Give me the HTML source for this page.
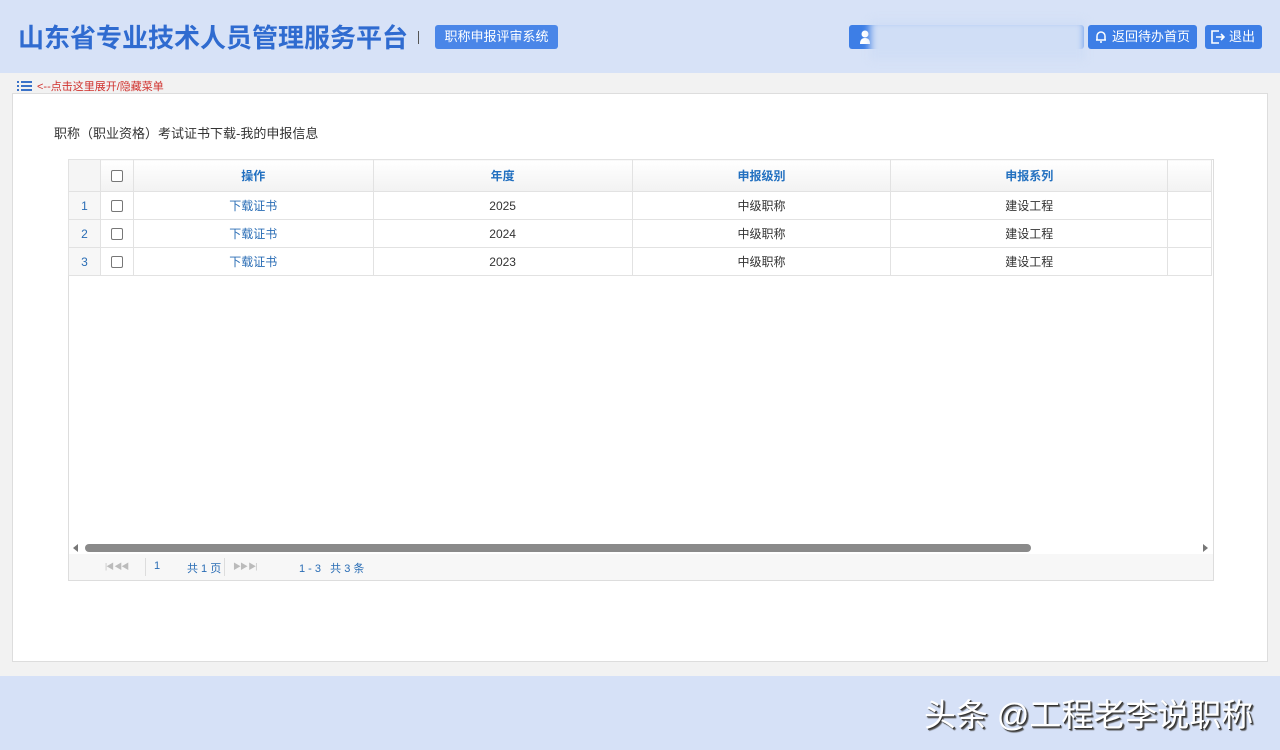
<!DOCTYPE html>
<html><head><meta charset="utf-8"><style>
*{margin:0;padding:0;box-sizing:border-box}
body{width:1280px;height:750px;overflow:hidden;background:#f2f2f2;font-family:"Liberation Sans","Noto Sans CJK SC",sans-serif;position:relative}
.hdr{position:absolute;left:0;top:0;width:1280px;height:73px;background:#d7e2f7}
.title{position:absolute;left:18px;top:21px;font-size:26px;font-weight:bold;color:#2f6bd0;line-height:34px}
.sep{position:absolute;left:418px;top:31px;width:1px;height:13px;background:#555}
.sys{position:absolute;left:435px;top:25px;width:123px;height:24px;background:#4a86e8;color:#fff;font-size:13px;line-height:24px;text-align:center;border-radius:3px}
.btn{position:absolute;top:25px;height:24px;background:#3d7ee6;color:#fff;font-size:13px;line-height:24px;border-radius:3px}
.blur{position:absolute;left:870px;top:20px;width:215px;height:40px;background:#d0def6;filter:blur(4px)}
.strip{position:absolute;left:0;top:73px;width:1280px;height:20px;background:#f2f2f2}
.menu{position:absolute;left:37px;top:78px;font-size:11px;color:#d0312d}
.panel{position:absolute;left:12px;top:93px;width:1256px;height:569px;background:#fff;border:1px solid #ddd}
.cap{position:absolute;left:54px;top:123px;font-size:13px;color:#333}
.grid{position:absolute;left:68px;top:159px;width:1146px;height:422px;border:1px solid #ddd;background:#fff}
table{border-collapse:collapse;position:absolute;left:-1px;top:-1px}
td{border:1px solid #e2e2e2;font-size:12px;text-align:center;color:#333;height:28px}
tr.h td{height:32px;background:linear-gradient(#fff,#f2f2f2);color:#2270c0;font-weight:bold;font-size:12px}
td.n{color:#2a6db5;background:#f7f7f7}
td.l{color:#2a6db5}
.cb{display:inline-block;width:12px;height:12px;border:1px solid #777;border-radius:2px;background:#fff;vertical-align:middle}
.pager{position:absolute;left:0;top:394px;width:1144px;height:26px;background:#f7f7f7;font-size:11px;color:#2a6db5}
.foot{position:absolute;left:0;top:676px;width:1280px;height:74px;background:#d6e1f7}
.wm{position:absolute;left:924px;top:690px;font-size:32px;color:#fff;text-shadow:1px 1px 0 #333,2px 2px 1px #555;white-space:nowrap}
.pi{color:#bbb;font-size:8px;letter-spacing:-1px}
</style></head><body>
<div class="hdr">
<div class="title">山东省专业技术人员管理服务平台</div>
<div class="sep"></div>
<div class="sys">职称申报评审系统</div>
<div class="btn" style="left:849px;width:235px;"><svg width="12" height="14" viewBox="0 0 12 14" style="position:absolute;left:10px;top:5px"><circle cx="6" cy="4" r="3.5" fill="#fff"/><path d="M1 14 Q1 8 6 8 Q11 8 11 14Z" fill="#fff"/></svg></div>
<div class="blur"></div>
<div class="btn" style="left:1088px;width:109px;padding-left:24px"><svg width="14" height="14" viewBox="0 0 14 14" style="position:absolute;left:6px;top:5px"><path d="M3 10 V6 a4 4 0 0 1 8 0 V10 H12 H2 Z M6 12 h2" stroke="#fff" stroke-width="1.5" fill="none"/></svg>返回待办首页</div>
<div class="btn" style="left:1205px;width:57px;padding-left:24px"><svg width="14" height="14" viewBox="0 0 14 14" style="position:absolute;left:6px;top:5px"><path d="M8 1H1V13H8M5 7H13M10 4L13 7L10 10" stroke="#fff" stroke-width="1.6" fill="none"/></svg>退出</div>
</div>
<div class="strip"></div>
<svg width="16" height="12" style="position:absolute;left:17px;top:80px"><g fill="#3a72c8"><rect x="0" y="1" width="2" height="2"/><rect x="4" y="1" width="11" height="2"/><rect x="0" y="5" width="2" height="2"/><rect x="4" y="5" width="11" height="2"/><rect x="0" y="9" width="2" height="2"/><rect x="4" y="9" width="11" height="2"/></g></svg>
<div class="menu">&lt;--点击这里展开/隐藏菜单</div>
<div class="panel"></div>
<div class="cap">职称（职业资格）考试证书下载-我的申报信息</div>
<div class="grid">
<table>
<tr class="h"><td style="width:32px;background:#f5f5f5"></td><td style="width:33px"><span class="cb"></span></td><td style="width:241px">操作</td><td style="width:260px">年度</td><td style="width:260px">申报级别</td><td style="width:278px">申报系列</td><td style="width:44px"></td></tr>
<tr><td class="n">1</td><td><span class="cb"></span></td><td class="l">下载证书</td><td>2025</td><td>中级职称</td><td>建设工程</td><td></td></tr>
<tr><td class="n">2</td><td><span class="cb"></span></td><td class="l">下载证书</td><td>2024</td><td>中级职称</td><td>建设工程</td><td></td></tr>
<tr><td class="n">3</td><td><span class="cb"></span></td><td class="l">下载证书</td><td>2023</td><td>中级职称</td><td>建设工程</td><td></td></tr>
</table>
<div style="position:absolute;left:4px;top:384px;width:0;height:0;border:4px solid transparent;border-right:5px solid #777;border-left:0"></div>
<div style="position:absolute;left:16px;top:384px;width:946px;height:8px;border-radius:4px;background:#8a8a8a"></div>
<div style="position:absolute;left:1134px;top:384px;width:0;height:0;border:4px solid transparent;border-left:5px solid #777;border-right:0"></div>
<div class="pager">
<span class="pi" style="position:absolute;left:36px;top:7px">|◀ ◀◀</span>
<span style="position:absolute;left:76px;top:4px;width:1px;height:18px;background:#ddd"></span>
<span style="position:absolute;left:85px;top:6px">1</span>
<span style="position:absolute;left:118px;top:6px">共 1 页</span>
<span style="position:absolute;left:155px;top:4px;width:1px;height:18px;background:#ddd"></span>
<span class="pi" style="position:absolute;left:164px;top:7px">▶▶ ▶|</span>
<span style="position:absolute;left:230px;top:6px">1 - 3 &nbsp; 共 3 条</span>
</div>
</div>
<div class="foot"></div>
<div class="wm">头条 @工程老李说职称</div>
</body></html>
